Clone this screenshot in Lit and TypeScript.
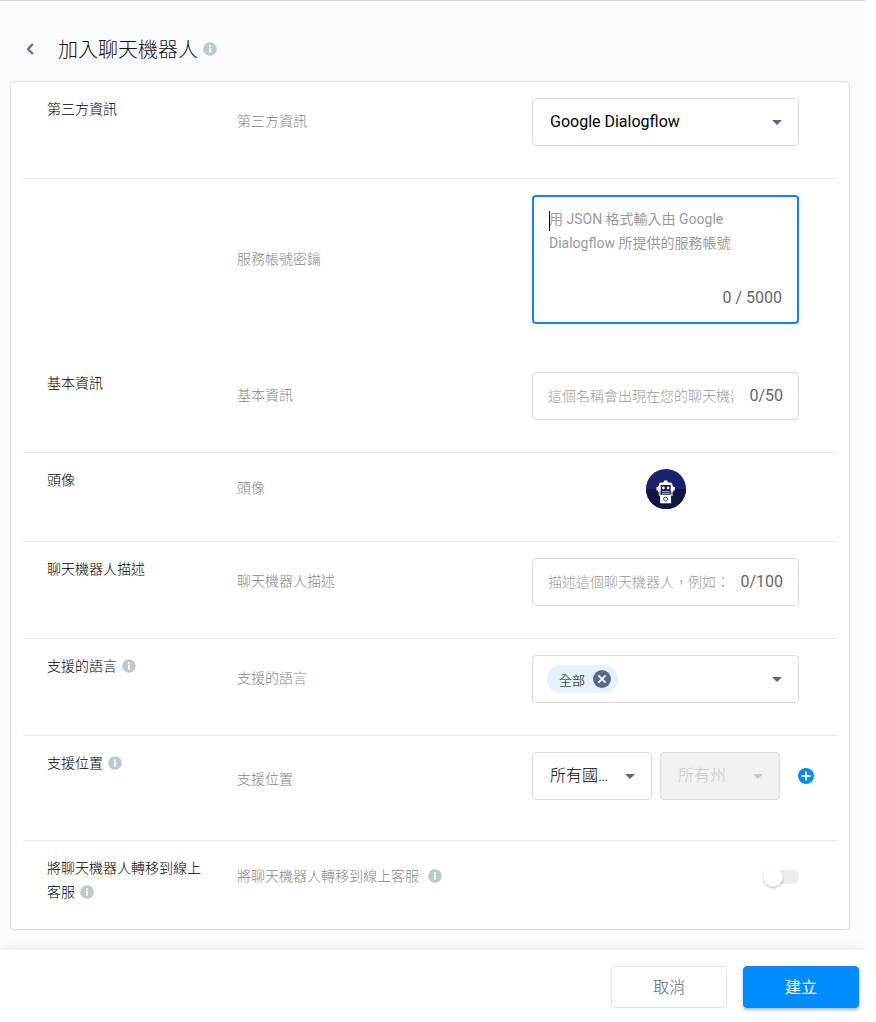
import { LitElement, html, css, svg, nothing } from "lit";
import { customElement, property, state } from "lit/decorators.js";

const base = css`
  *, *::before, *::after { box-sizing: border-box; }
  button, input, select, textarea { font: inherit; color: inherit; margin: 0; }
`;

@customElement("info-icon")
class InfoIcon extends LitElement {
  static styles = css`
    :host { display: inline-flex; width: 14px; height: 14px; flex: none; }
    svg { display: block; }
  `;
  render() {
    return html`<svg width="14" height="14" viewBox="0 0 14 14" role="img" aria-label="說明">
      <circle cx="7" cy="7" r="6.8" fill="#bccacd" />
      <path d="M6 3.3h2v1.5H6zM6 5.8h2v4.7H6z" fill="#fff" />
    </svg>`;
  }
}

@customElement("form-row")
class FormRow extends LitElement {
  @property() heading = "";
  @property() label = "";
  @property({ type: Boolean }) info = false;
  @property({ type: Boolean }) labelInfo = false;

  static styles = [base, css`
    :host {
      display: grid;
      grid-template-columns: 190px minmax(0, 1fr) auto;
      padding: 16px 38px 32px 24px;
      border-bottom: 1px solid #e8e8e8;
    }
    :host([plain]), :host(:last-of-type) { border-bottom: 0; }
    .heading {
      margin: -1px 0 0;
      height: 40px;
      padding-right: 24px;
      font-size: 14px;
      font-weight: 300;
      line-height: 24px;
      color: #000;
    }
    .heading info-icon { margin-left: 5px; vertical-align: -2px; }
    .label {
      display: flex;
      align-items: center;
      gap: 9px;
      padding-bottom: 2px;
      font-size: 14px;
      font-weight: 300;
      line-height: 24px;
      color: #868686;
    }
    .control { display: flex; flex-direction: column; width: 267px; }
  `];

  render() {
    return html`
      <h2 class="heading">${this.heading}${this.info ? html`<info-icon></info-icon>` : nothing}</h2>
      <div class="label"><span>${this.label}</span>${this.labelInfo ? html`<info-icon></info-icon>` : nothing}</div>
      <div class="control"><slot></slot></div>
    `;
  }
}

const arrow = html`<svg class="arrow" width="10" height="5" viewBox="0 0 10 5" aria-hidden="true">
  <path d="M0 0h10L5 5z" fill="currentColor" />
</svg>`;

const robot = svg`
  <defs><clipPath id="round"><circle cx="20" cy="20" r="20" /></clipPath></defs>
  <g clip-path="url(#round)">
    <rect width="40" height="40" fill="#19226d" />
    <rect y="20" width="40" height="20" fill="#11163f" />
  </g>
  <path d="M17.5 13.5a2.2 2.2 0 0 1 4.4 0h2.6a2 2 0 0 1 1.9 2v1.2h1v1.3h1.4v3.6h-1.4v1.3h-1.6V25H13.6v-2.1H12v-1.3h-1.5V18H12v-1.3h1v-1.2a2 2 0 0 1 1.9-2z" fill="#fff" />
  <path d="M12.6 22.5h14.2V27H12.6z" fill="#a9abb9" />
  <path d="M14.7 16h10v9.6h-10z" fill="#161c50" />
  <circle cx="17.4" cy="19" r="1.4" fill="#fff" />
  <circle cx="22.1" cy="19" r="1.4" fill="#fff" />
  <path d="M16 22.3h7.6v.9H16zM16 23.9h7.6v.8H16z" fill="#c3c5d2" />
  <path d="M14.1 26h11v8.3h-11z" fill="#fff" />
  <circle cx="19.6" cy="30.1" r="2" fill="none" stroke="#2b2d5c" stroke-width=".9" />
`;

@customElement("app-root")
class AppRoot extends LitElement {
  @state() private secret = "";
  @state() private name = "";
  @state() private description = "";
  @state() private languages = ["全部"];

  static styles = [base, css`
    :host {
      display: block;
      min-height: 100vh;
      padding-right: 11px;
      background: #fff;
      font-family: Roboto, "Noto Sans CJK TC", sans-serif;
      font-size: 16px;
      color: #111;
    }
    main {
      padding: 28px 15px 20px 10px;
      border-top: 1px solid #dcdce0;
      background: #fafbff;
    }
    .header { display: flex; align-items: center; height: 40px; margin-bottom: 12px; }
    .back {
      display: flex;
      align-items: center;
      justify-content: center;
      width: 40px;
      height: 40px;
      padding: 0;
      border: 0;
      background: none;
      color: #54698d;
    }
    .title { margin: 0 5px 0 8px; padding-top: 2px; font-size: 20px; font-weight: 300; line-height: 28px; }
    .card {
      padding: 0 12px;
      border: 1px solid #dfdfe4;
      border-radius: 4px;
      background: #fff;
    }
    .field {
      position: relative;
      display: flex;
      align-items: center;
      height: 48px;
      border: 1px solid #dcdcdc;
      border-radius: 4px;
      background: #fff;
    }
    .field select {
      appearance: none;
      width: 100%;
      height: 100%;
      padding: 0 40px 2px 17px;
      border: 0;
      outline: 0;
      background: none;
      font-size: 16px;
      color: #000;
      text-overflow: ellipsis;
    }
    .arrow { position: absolute; right: 16px; top: 21px; color: #54698d; pointer-events: none; }
    .light select { font-weight: 300; }
    .narrow { width: 120px; }
    .disabled { background: #f2f2f2; }
    .disabled select { color: #c8c8c8; opacity: 1; }
    .disabled .arrow { color: #c8c8c8; }
    .text { gap: 16px; padding: 0 15px; }
    .text input {
      flex: 1;
      min-width: 0;
      padding: 0;
      border: 0;
      outline: 0;
      background: none;
      font-size: 14px;
      line-height: 24px;
    }
    ::placeholder { color: #9a9a9a; opacity: 1; font-weight: 300; }
    textarea::placeholder { font-weight: 400; }
    .counter { font-size: 16px; line-height: 24px; color: #666; }
    .area {
      flex-direction: column;
      align-items: stretch;
      height: auto;
      padding: 10px 15px 12px;
      border: 2px solid #1687e0;
    }
    .area textarea {
      height: 79px;
      padding: 0;
      border: 0;
      outline: 0;
      resize: none;
      background: none;
      font-size: 14px;
      line-height: 24px;
      caret-color: transparent;
    }
    .area .counter { text-align: right; }
    .area::before {
      content: "";
      position: absolute;
      left: 15px;
      top: 14px;
      width: 1px;
      height: 20px;
      background: #000;
    }
    .avatar {
      align-self: center;
      width: 40px;
      height: 40px;
      padding: 0;
      border: 0;
      border-radius: 50%;
      background: none;
    }
    .avatar svg { display: block; }
    .chips { padding-left: 14px; }
    .chip {
      display: flex;
      flex: none;
      align-items: center;
      gap: 8px;
      height: 28px;
      padding: 0 7px 0 12px;
      border-radius: 14px;
      background: #e3f2fd;
      font-size: 13px;
      font-weight: 300;
      color: #000;
    }
    .remove { display: flex; padding: 0; border: 0; background: none; color: #54698d; }
    .places { display: flex; align-items: center; gap: 8px; width: 284px; margin-bottom: 8px; }
    .add { display: flex; margin-left: 10px; padding: 0; border: 0; background: none; color: #008cff; }
    .switch {
      appearance: none;
      position: relative;
      align-self: flex-end;
      width: 36px;
      height: 14px;
      margin: 13px 0;
      border-radius: 7px;
      background: #ebebeb;
    }
    .switch::before {
      content: "";
      position: absolute;
      left: 0;
      top: -3px;
      width: 20px;
      height: 20px;
      border-radius: 50%;
      background: #fff;
      box-shadow: 0 1px 2px rgba(0, 0, 0, 0.3);
    }
    .switch:checked { background: #99d1ff; }
    .switch:checked::before { left: 16px; background: #008cff; }
    .footer {
      position: relative;
      display: flex;
      justify-content: flex-end;
      gap: 16px;
      padding: 16px 6px 14px;
      background: #fff;
      box-shadow: 0 -4px 8px -2px rgba(0, 0, 0, 0.08);
      clip-path: inset(-12px 0 0 0);
    }
    .action {
      width: 116px;
      height: 42px;
      padding: 0 0 3px;
      border: 1px solid #e2e4e8;
      border-radius: 4px;
      background: #fff;
      font-size: 16px;
      font-weight: 300;
      color: #54698d;
    }
    .primary {
      border-color: #008cff;
      background: #008cff;
      color: #fff;
      font-weight: 400;
      box-shadow: 0 2px 3px rgba(0, 60, 110, 0.35);
    }
  `];

  render() {
    return html`
      <main>
        <header class="header">
          <button class="back" aria-label="返回">
            <svg width="8" height="12" viewBox="0 0 8 12" aria-hidden="true">
              <path d="M6.8 1L2 6l4.8 5" fill="none" stroke="currentColor" stroke-width="2" />
            </svg>
          </button>
          <h1 class="title">加入聊天機器人</h1>
          <info-icon></info-icon>
        </header>
        <section class="card">
          <form-row heading="第三方資訊" label="第三方資訊">
            <div class="field">
              <select aria-label="第三方資訊"><option>Google Dialogflow</option></select>${arrow}
            </div>
          </form-row>
          <form-row plain label="服務帳號密鑰">
            <div class="field area">
              <textarea aria-label="服務帳號密鑰" maxlength="5000"
                placeholder="用 JSON 格式輸入由 Google Dialogflow 所提供的服務帳號"
                .value=${this.secret}
                @input=${(e: Event) => (this.secret = (e.target as HTMLTextAreaElement).value)}></textarea>
              <span class="counter">${this.secret.length} / 5000</span>
            </div>
          </form-row>
          <form-row heading="基本資訊" label="基本資訊">
            <div class="field text">
              <input aria-label="基本資訊" maxlength="50" placeholder="這個名稱會出現在您的聊天機器人"
                @input=${(e: Event) => (this.name = (e.target as HTMLInputElement).value)} />
              <span class="counter">${this.name.length}/50</span>
            </div>
          </form-row>
          <form-row heading="頭像" label="頭像">
            <button class="avatar" aria-label="頭像"><svg width="40" height="40" viewBox="0 0 40 40">${robot}</svg></button>
          </form-row>
          <form-row heading="聊天機器人描述" label="聊天機器人描述">
            <div class="field text">
              <input aria-label="聊天機器人描述" maxlength="100" placeholder="描述這個聊天機器人，例如："
                @input=${(e: Event) => (this.description = (e.target as HTMLInputElement).value)} />
              <span class="counter">${this.description.length}/100</span>
            </div>
          </form-row>
          <form-row heading="支援的語言" label="支援的語言" info>
            <div class="field chips">
              ${this.languages.map((l) => html`
                <span class="chip">${l}
                  <button class="remove" aria-label="移除" @click=${() => (this.languages = this.languages.filter((x) => x !== l))}>
                    <svg width="18" height="18" viewBox="0 0 18 18" aria-hidden="true">
                      <circle cx="9" cy="9" r="9" fill="currentColor" />
                      <path d="M5.4 5.4l7.2 7.2M12.6 5.4l-7.2 7.2" stroke="#fff" stroke-width="1.9" />
                    </svg>
                  </button>
                </span>`)}
              <select aria-label="支援的語言"><option></option></select>${arrow}
            </div>
          </form-row>
          <form-row heading="支援位置" label="支援位置" info>
            <div class="places">
              <div class="field narrow light">
                <select aria-label="國家"><option>所有國家</option></select>${arrow}
              </div>
              <div class="field narrow light disabled">
                <select aria-label="州" disabled><option>所有州</option></select>${arrow}
              </div>
              <button class="add" aria-label="新增">
                <svg width="16" height="16" viewBox="0 0 16 16" aria-hidden="true">
                  <circle cx="8" cy="8" r="8" fill="currentColor" />
                  <path d="M8 3.5v9M3.5 8h9" stroke="#fff" stroke-width="1.8" />
                </svg>
              </button>
            </div>
          </form-row>
          <form-row heading="將聊天機器人轉移到線上客服" label="將聊天機器人轉移到線上客服" info labelInfo>
            <input class="switch" type="checkbox" role="switch" aria-label="將聊天機器人轉移到線上客服" />
          </form-row>
        </section>
      </main>
      <footer class="footer">
        <button class="action">取消</button>
        <button class="action primary">建立</button>
      </footer>
    `;
  }
}
